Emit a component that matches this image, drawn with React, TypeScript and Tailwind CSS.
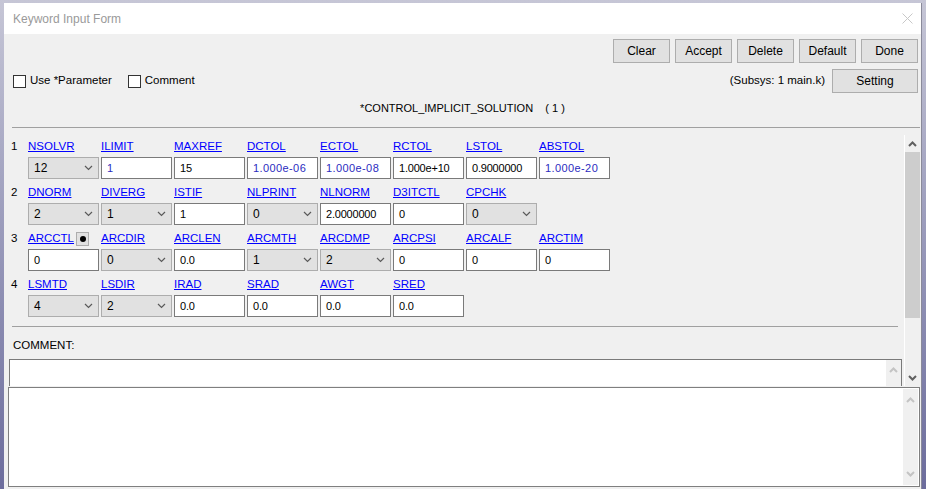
type Cell = { name: string; kind: "sel" | "in"; value: string; blue?: boolean; dot?: boolean };

const rows: Cell[][] = [
  [
    { name: "NSOLVR", kind: "sel", value: "12" },
    { name: "ILIMIT", kind: "in", value: "1", blue: true },
    { name: "MAXREF", kind: "in", value: "15" },
    { name: "DCTOL", kind: "in", value: "1.000e-06", blue: true },
    { name: "ECTOL", kind: "in", value: "1.000e-08", blue: true },
    { name: "RCTOL", kind: "in", value: "1.000e+10" },
    { name: "LSTOL", kind: "in", value: "0.9000000" },
    { name: "ABSTOL", kind: "in", value: "1.000e-20", blue: true },
  ],
  [
    { name: "DNORM", kind: "sel", value: "2" },
    { name: "DIVERG", kind: "sel", value: "1" },
    { name: "ISTIF", kind: "in", value: "1" },
    { name: "NLPRINT", kind: "sel", value: "0" },
    { name: "NLNORM", kind: "in", value: "2.0000000" },
    { name: "D3ITCTL", kind: "in", value: "0" },
    { name: "CPCHK", kind: "sel", value: "0" },
  ],
  [
    { name: "ARCCTL", kind: "in", value: "0", dot: true },
    { name: "ARCDIR", kind: "sel", value: "0" },
    { name: "ARCLEN", kind: "in", value: "0.0" },
    { name: "ARCMTH", kind: "sel", value: "1" },
    { name: "ARCDMP", kind: "sel", value: "2" },
    { name: "ARCPSI", kind: "in", value: "0" },
    { name: "ARCALF", kind: "in", value: "0" },
    { name: "ARCTIM", kind: "in", value: "0" },
  ],
  [
    { name: "LSMTD", kind: "sel", value: "4" },
    { name: "LSDIR", kind: "sel", value: "2" },
    { name: "IRAD", kind: "in", value: "0.0" },
    { name: "SRAD", kind: "in", value: "0.0" },
    { name: "AWGT", kind: "in", value: "0.0" },
    { name: "SRED", kind: "in", value: "0.0" },
  ],
];

function Chevron({ up, color, bold }: { up?: boolean; color: string; bold?: boolean }) {
  return (
    <svg width="9" height="6" viewBox="0 0 9 6">
      <path
        d={up ? "M1 5 L4.5 1.5 L8 5" : "M1 1 L4.5 4.5 L8 1"}
        fill="none"
        stroke={color}
        strokeWidth={bold ? 2 : 1.2}
      />
    </svg>
  );
}

function Btn({ label, w }: { label: string; w: string }) {
  return (
    <div className={`${w} h-[24px] flex items-center justify-center bg-[#e1e1e1] border border-[#adadad] text-[12px] text-black`}>
      {label}
    </div>
  );
}

function Field({ c }: { c: Cell }) {
  if (c.kind === "sel") {
    return (
      <div className="w-[71px] h-[22px] shrink-0 flex items-center justify-between bg-[#e1e1e1] border border-[#adadad] pl-[5px] pr-[5px] text-[12px] text-black">
        <span>{c.value}</span>
        <Chevron color="#5a5a5a" />
      </div>
    );
  }
  return (
    <div
      className={`w-[71px] h-[22px] shrink-0 flex items-center bg-white border border-[#7a7a7a] pl-[5px] ${
        c.blue ? "text-[11px] tracking-[0.4px] text-[#2b2bc0]" : "text-[11px] tracking-[-0.2px] text-black"
      }`}
    >
      {c.value}
    </div>
  );
}

function Checkbox({ label }: { label: string }) {
  return (
    <div className="flex items-center gap-[4px]">
      <div className="w-[13px] h-[13px] border border-[#333333] bg-white" />
      <span className="text-black">{label}</span>
    </div>
  );
}

export default function App() {
  return (
    <div className="w-[926px] h-[489px] overflow-hidden bg-gradient-to-b from-[#c6c6d6] to-[#6c6c9c] pt-[3px] pl-[4px] font-['Liberation_Sans',Arial,sans-serif] text-[11.5px]">
      <div className="w-[918px] h-[486px] flex flex-col bg-[#f0f0f0] border-r border-[#8a8a9a]">
        {/* title bar */}
        <div className="h-[31px] shrink-0 bg-white flex items-center justify-between pl-[9px] pr-[8px]">
          <span className="text-[12px] text-[#9a9a9a]">Keyword Input Form</span>
          <svg width="11" height="11" viewBox="0 0 11 11">
            <path d="M0.5 0.5 L10.5 10.5 M10.5 0.5 L0.5 10.5" stroke="#c8c8c8" strokeWidth="1" />
          </svg>
        </div>

        {/* action buttons */}
        <div className="mt-[5px] shrink-0 flex justify-end gap-[5px] pr-[3px]">
          {["Clear", "Accept", "Delete", "Default", "Done"].map((b) => (
            <Btn key={b} label={b} w="w-[57px]" />
          ))}
        </div>

        <div className="mt-[6px] h-[24px] shrink-0 flex items-center justify-between pl-[9px] pr-[3px]">
          <div className="flex items-center gap-[16px]">
            <Checkbox label="Use *Parameter" />
            <Checkbox label="Comment" />
          </div>
          <div className="flex items-center gap-[7px]">
            <span className="text-black">(Subsys: 1 main.k)</span>
            <Btn label="Setting" w="w-[86px]" />
          </div>
        </div>

        <div className="mt-[7px] h-[16px] shrink-0 leading-[16px] text-center text-[11px] text-black whitespace-pre">
          {"*CONTROL_IMPLICIT_SOLUTION    ( 1 )"}
        </div>

        <div className="mt-[11px] ml-[8px] mr-[1px] h-[1px] shrink-0 bg-[#a0a0a0]" />

        {/* main scroll area */}
        <div className="mt-[7px] ml-[4px] w-[912px] h-[251px] shrink-0 flex overflow-hidden">
          <div className="w-[888px] shrink-0 pt-[2px] flex flex-col">
            <div className="flex flex-col gap-[4px] shrink-0">
              {rows.map((r, i) => (
                <div key={i} className="flex">
                  <div className="w-[20px] pl-[3px] pt-[1px] leading-[16px] text-black">{i + 1}</div>
                  <div className="flex gap-[2px]">
                    {r.map((c) => (
                      <div key={c.name} className="flex flex-col w-[71px]">
                        <div className="h-[20px] shrink-0 pt-[1px] flex items-start gap-[2px]">
                          <span className="leading-[16px] text-[#0000ff] underline">{c.name}</span>
                          {c.dot && (
                            <div className="w-[13px] h-[14px] mt-[2px] flex items-center justify-center bg-[#e1e1e1] border border-[#adadad]">
                              <div className="w-[6px] h-[6px] rounded-full bg-black" />
                            </div>
                          )}
                        </div>
                        <Field c={c} />
                      </div>
                    ))}
                  </div>
                </div>
              ))}
            </div>

            <div className="mt-[9px] ml-[4px] w-[886px] h-[1px] shrink-0 bg-[#a0a0a0]" />
            <div className="mt-[10px] ml-[5px] h-[16px] shrink-0 leading-[16px] text-black">COMMENT:</div>
            <div className="mt-[6px] ml-[1px] w-[893px] h-[32px] shrink-0 bg-white border border-[#7a7a7a] flex justify-end">
              <div className="w-[15px] bg-[#f0f0f0] flex justify-center pt-[7px]">
                <Chevron up color="#c4c4c4" bold />
              </div>
            </div>
          </div>

          {/* scrollbar */}
          <div className="ml-[8px] w-[16px] shrink-0 border-l border-white bg-[#f0f0f0] flex flex-col">
            <div className="h-[17px] shrink-0 flex items-center justify-center">
              <Chevron up color="#606060" bold />
            </div>
            <div className="h-[166px] shrink-0 bg-[#cdcdcd]" />
            <div className="flex-1" />
            <div className="h-[17px] shrink-0 flex items-center justify-center">
              <Chevron color="#606060" bold />
            </div>
          </div>
        </div>

        {/* lower text area */}
        <div className="mt-[1px] ml-[4px] w-[912px] h-[100px] shrink-0 bg-white border border-[#7f7f7f] flex justify-end p-[1px]">
          <div className="w-[15px] bg-[#f0f0f0] flex flex-col items-center justify-between py-[8px]">
            <Chevron up color="#c4c4c4" bold />
            <Chevron color="#c4c4c4" bold />
          </div>
        </div>
      </div>
    </div>
  );
}
